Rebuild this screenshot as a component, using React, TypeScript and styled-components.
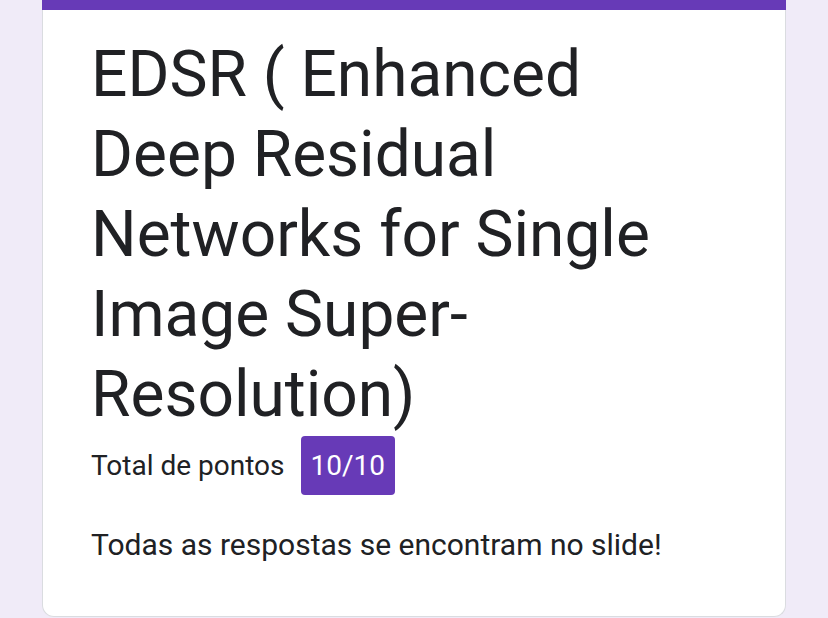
import React from "react";
import styled, { createGlobalStyle } from "styled-components";

const Global = createGlobalStyle`
  html, body { margin: 0; padding: 0; background: #f0ebf8; }
  body { font-family: Roboto, "Noto Sans", Arial, sans-serif; color: #202124; }
`;

const Page = styled.div`
  width: 828px;
  height: 618px;
  overflow: hidden;
  padding: 0 42px;
  box-sizing: border-box;
`;

const Card = styled.div`
  background: #fff;
  border: 1px solid #dadce0;
  border-top: none;
  border-radius: 0 0 12px 12px;
  height: 617px;
  box-sizing: border-box;
  display: flex;
  flex-direction: column;
`;

const TopBar = styled.div`
  height: 10px;
  background: #673ab7;
  margin: 0 -1px;
`;

const Body = styled.div`
  padding: 25px 72px 0 48px;
  display: flex;
  flex-direction: column;
`;

const Title = styled.h1`
  margin: 0;
  font-size: 64px;
  line-height: 80px;
  font-weight: 400;
  color: #202124;
`;

const ScoreRow = styled.div`
  display: flex;
  align-items: center;
  gap: 16px;
  margin-top: 1px;
`;

const ScoreLabel = styled.span`
  font-size: 28px;
  color: #202124;
`;

const Badge = styled.span`
  background: #673ab7;
  color: #fff;
  border-radius: 4px;
  font-size: 28px;
  height: 59px;
  padding: 0 10px;
  display: flex;
  align-items: center;
`;

const Description = styled.p`
  margin: 30px 0 0;
  font-size: 30px;
  line-height: 40px;
  color: #202124;
`;

export default function App() {
  return (
    <>
      <Global />
      <Page>
        <Card>
          <TopBar />
          <Body>
            <Title>
              EDSR ( Enhanced Deep Residual Networks for Single Image Super-Resolution)
            </Title>
            <ScoreRow>
              <ScoreLabel>Total de pontos</ScoreLabel>
              <Badge>10/10</Badge>
            </ScoreRow>
            <Description>Todas as respostas se encontram no slide!</Description>
          </Body>
        </Card>
      </Page>
    </>
  );
}
